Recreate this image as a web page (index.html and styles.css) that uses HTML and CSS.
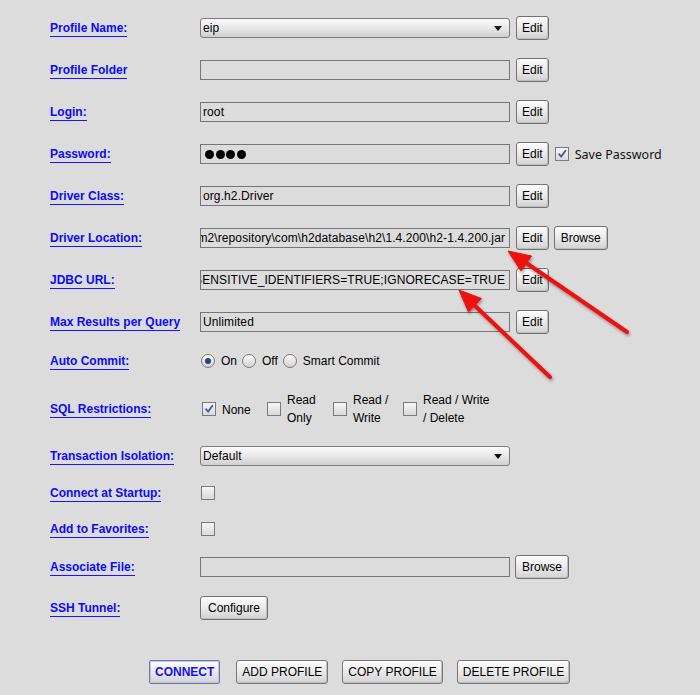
FILE: index.html
```html
<!DOCTYPE html>
<html>
<head>
<meta charset="utf-8">
<link rel="stylesheet" href="styles.css">
</head>
<body>
<div class="form">
  <div class="row">
    <div class="lbl"><span>Profile Name:</span></div>
    <div class="ctl"><div class="field combo"><span class="val">eip</span><span class="caret"></span></div><button class="btn">Edit</button></div>
  </div>
  <div class="row">
    <div class="lbl"><span>Profile Folder</span></div>
    <div class="ctl"><div class="field"></div><button class="btn">Edit</button></div>
  </div>
  <div class="row">
    <div class="lbl"><span>Login:</span></div>
    <div class="ctl"><div class="field">root</div><button class="btn">Edit</button></div>
  </div>
  <div class="row">
    <div class="lbl"><span>Password:</span></div>
    <div class="ctl"><div class="field pw"><i></i><i></i><i></i><i></i></div><button class="btn">Edit</button>
      <span class="chk on ml6"><svg viewBox="0 0 14 14"><path d="M3 6.5 L6 10 L11.5 2.5" /></svg></span><span class="savepw">Save Password</span></div>
  </div>
  <div class="row">
    <div class="lbl"><span>Driver Class:</span></div>
    <div class="ctl"><div class="field">org.h2.Driver</div><button class="btn">Edit</button></div>
  </div>
  <div class="row">
    <div class="lbl"><span>Driver Location:</span></div>
    <div class="ctl"><div class="field end"><span>m2\repository\com\h2database\h2\1.4.200\h2-1.4.200.jar</span></div><button class="btn">Edit</button><button class="btn b5">Browse</button></div>
  </div>
  <div class="row">
    <div class="lbl"><span>JDBC URL:</span></div>
    <div class="ctl"><div class="field end"><span>SENSITIVE_IDENTIFIERS=TRUE;IGNORECASE=TRUE</span></div><button class="btn">Edit</button></div>
  </div>
  <div class="row">
    <div class="lbl"><span>Max Results per Query</span></div>
    <div class="ctl"><div class="field">Unlimited</div><button class="btn">Edit</button></div>
  </div>
  <div class="row h36">
    <div class="lbl"><span>Auto Commit:</span></div>
    <div class="ctl radios">
      <span class="opt"><span class="radio on"></span>On</span>
      <span class="opt"><span class="radio"></span>Off</span>
      <span class="opt"><span class="radio"></span>Smart Commit</span>
    </div>
  </div>
  <div class="row h60">
    <div class="lbl"><span>SQL Restrictions:</span></div>
    <div class="ctl restr">
      <span class="ropt w65"><span class="chk on"><svg viewBox="0 0 14 14"><path d="M3 6.5 L6 10 L11.5 2.5" /></svg></span><span class="rt">None</span></span>
      <span class="ropt w66"><span class="chk"></span><span class="rt">Read<br>Only</span></span>
      <span class="ropt w70"><span class="chk"></span><span class="rt">Read /<br>Write</span></span>
      <span class="ropt"><span class="chk"></span><span class="rt">Read / Write<br>/ Delete</span></span>
    </div>
  </div>
  <div class="row h33">
    <div class="lbl"><span>Transaction Isolation:</span></div>
    <div class="ctl"><div class="field combo"><span class="val">Default</span><span class="caret"></span></div></div>
  </div>
  <div class="row h41">
    <div class="lbl"><span>Connect at Startup:</span></div>
    <div class="ctl"><span class="chk ml1"></span></div>
  </div>
  <div class="row h31">
    <div class="lbl"><span>Add to Favorites:</span></div>
    <div class="ctl"><span class="chk ml1"></span></div>
  </div>
  <div class="row h46">
    <div class="lbl"><span>Associate File:</span></div>
    <div class="ctl"><div class="field"></div><button class="btn wb">Browse</button></div>
  </div>
  <div class="row h36">
    <div class="lbl"><span>SSH Tunnel:</span></div>
    <div class="ctl"><button class="btn first">Configure</button></div>
  </div>
</div>
<div class="actions">
  <button class="abtn connect">CONNECT</button>
  <button class="abtn">ADD PROFILE</button>
  <button class="abtn">COPY PROFILE</button>
  <button class="abtn">DELETE PROFILE</button>
</div>
<svg class="arrows" width="700" height="695" viewBox="0 0 700 695">
  <g class="arr">
    <line x1="627" y1="332" x2="522" y2="260" />
    <polygon points="508,251 531.5,256 521,271" />
    <line x1="550" y1="377" x2="471" y2="302" />
    <polygon points="459,290 481.5,298.5 468.5,312" />
  </g>
</svg>
</body>
</html>
```

FILE: styles.css
```css
* { box-sizing: border-box; }
html, body { margin: 0; padding: 0; background: #dcdcdc; }
body {
  width: 700px;
  height: 695px;
  position: relative;
  overflow: hidden;
  font-family: "Liberation Sans", Arial, sans-serif;
  font-size: 12px;
  color: #000;
}
.form { padding: 7px 0 0 50px; }
.row {
  display: grid;
  grid-template-columns: 150px 1fr;
  align-items: center;
  height: 42px;
}
.row.h36 { height: 36px; }
.row.h60 { height: 60px; }
.row.h33 { height: 33px; }
.row.h41 { height: 41px; }
.row.h31 { height: 31px; }
.row.h46 { height: 46px; }
.lbl { justify-self: start; padding-top: 2px; }
.lbl span {
  display: inline-block;
  font-weight: bold;
  color: #0b0bf5;
  line-height: 14px;
  padding-bottom: 1px;
  border-bottom: 1px solid #1515ff;
}
.ctl { display: flex; align-items: center; }
.field {
  width: 310px;
  height: 20px;
  border: 1px solid #767676;
  padding: 0 2px;
  line-height: 18px;
  white-space: nowrap;
  overflow: hidden;
  flex: none;
  letter-spacing: 0.1px;
}
.field.end { display: flex; justify-content: flex-end; padding-right: 4px; }
.field.end span { flex: none; }
.combo {
  display: flex;
  align-items: center;
  border-radius: 3px;
  border-color: #7c7c7c;
  background: linear-gradient(#fbfbfb, #e6e6e6 55%, #cfcfcf);
}
.combo .val { flex: 1; }
.caret {
  width: 0; height: 0;
  border-left: 4px solid transparent;
  border-right: 4px solid transparent;
  border-top: 5px solid #111;
  margin-right: 5px;
  margin-top: 1px;
}
.pw { display: flex; align-items: center; gap: 1.5px; padding-left: 4px; }
.pw i { display: block; width: 9px; height: 9px; border-radius: 50%; background: #000; }
.btn {
  height: 24px;
  margin: 0 0 0 6px;
  padding: 0 5px;
  border: 1px solid #727272;
  border-radius: 3px;
  background: linear-gradient(#fcfcfc, #ececec 45%, #d2d2d2);
  box-shadow: inset -1px -1px 0 #bdbdbd;
  font: 12px "Liberation Sans", Arial, sans-serif;
  color: #000;
  flex: none;
}
.btn.b5 { margin-left: 5px; padding: 0 6px; }
.btn.wb { margin-left: 5px; padding: 0 6px; }
.btn.first { margin-left: 0; padding: 0 7px; }
.chk {
  display: inline-block;
  width: 14px; height: 14px;
  border: 1px solid #7a7a7a;
  background: linear-gradient(#f6f6f6, #d9d9d9);
  flex: none;
}
.chk svg { display: block; width: 12px; height: 12px; }
.chk svg path { fill: none; stroke: #3d5a98; stroke-width: 2; }
.ml6 { margin-left: 6px; }
.ml1 { margin-left: 1px; }
.savepw {
  margin-left: 6px;
  font-family: "Noto Sans", sans-serif;
  font-size: 12.5px;
  color: #111;
}
.radios { padding-left: 1px; }
.opt { display: flex; align-items: center; gap: 6px; margin-right: 5px; }
.radio {
  width: 14px; height: 14px;
  border-radius: 50%;
  border: 1px solid #7a7a7a;
  background: linear-gradient(#fbfbfb, #d3d3d3);
  display: flex; align-items: center; justify-content: center;
}
.radio.on::after {
  content: "";
  width: 6px; height: 6px;
  border-radius: 50%;
  background: #2c3f86;
}
.restr { padding-left: 2px; }
.ropt { display: flex; align-items: center; gap: 6px; flex: none; }
.ropt.w65 { width: 65px; }
.ropt.w66 { width: 66px; }
.ropt.w70 { width: 70px; }
.rt { line-height: 18px; }
.ropt.w65 .rt { margin-top: 1px; }
.actions {
  display: flex;
  gap: 14px;
  padding-left: 149px;
  margin-top: 34px;
}
.abtn {
  height: 24px;
  padding: 0 5px;
  border: 1px solid #787878;
  border-radius: 3px;
  background: linear-gradient(#fcfcfc, #ececec 45%, #d2d2d2);
  box-shadow: inset -1px -1px 0 #bdbdbd;
  font: 12px "Liberation Sans", Arial, sans-serif;
  color: #000;
}
.abtn.connect {
  margin-right: 2px;
  font-weight: bold;
  color: #1212f0;
  border-color: #6b7ba6;
  border-radius: 2px;
  box-shadow: inset 0 0 0 1px #b9c4e4;
}
.arrows { position: absolute; left: 0; top: 0; pointer-events: none; }
.arr { filter: drop-shadow(1px 2px 1.5px rgba(0,0,0,0.35)); }
.arr line { stroke: #f01010; stroke-width: 4; stroke-linecap: round; }
.arr polygon { fill: #f01010; stroke: #f01010; stroke-width: 1; stroke-linejoin: round; }
```
